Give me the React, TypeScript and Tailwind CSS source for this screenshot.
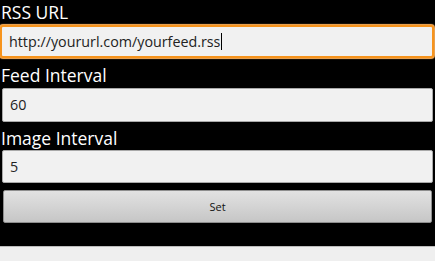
import React from "react";

const font = { fontFamily: '"Open Sans", "Noto Sans", sans-serif' };

function Label({ children, className }: { children: React.ReactNode; className: string }) {
  return (
    <div className={`flex items-end pl-px text-[17.5px] leading-none text-white ${className}`}>
      {children}
    </div>
  );
}

function Field({ value, className }: { value: string; className: string }) {
  return (
    <div
      className={`flex items-center rounded-[2px] border border-[#a9a9a9] bg-[#f1f1f1] pl-[7px] text-[14.3px] text-[#222] ${className}`}
    >
      {value}
    </div>
  );
}

export default function App() {
  return (
    <div className="flex h-[261px] w-[435px] flex-col overflow-hidden bg-black" style={font}>
      <Label className="h-[25px] pb-[4px]">RSS URL</Label>
      <div className="mr-px flex h-[33px] items-center rounded-[3px] border-[2px] border-[#f7941d] bg-[#f1f1f1] pl-[7px] text-[14.3px] text-[#222] shadow-[0_0_1px_1px_#ffb35c]">
        <span>http://yoururl.com/yourfeed.rss</span>
        <span className="ml-px h-[17px] w-px bg-black" />
      </div>
      <Label className="h-[30px] pb-[4px]">Feed Interval</Label>
      <Field value="60" className="mx-[2px] h-[34px]" />
      <Label className="h-[28px] pb-[3px]">Image Interval</Label>
      <Field value="5" className="mx-[2px] h-[33px]" />
      <button
        className="mx-[3px] mt-[7px] flex h-[33px] items-center justify-center rounded-[2px] border border-[#8e8e8e] bg-gradient-to-b from-[#e2e2e2] to-[#c6c6c6] pt-px text-[11px] text-[#111]"
      >
        Set
      </button>
      <div className="flex-1" />
      <div className="h-[15px] border-t border-[#bcbcbc] bg-[#efefef]" />
    </div>
  );
}
